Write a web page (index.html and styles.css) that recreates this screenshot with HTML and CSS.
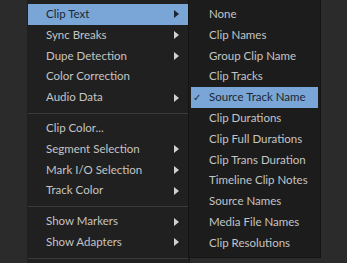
FILE: index.html
```html
<!DOCTYPE html>
<html lang="en">
<head>
    <meta charset="UTF-8">
    <title>Clip Text Menu</title>
    <link rel="stylesheet" href="styles.css">
</head>
<body>
    <div class="screen">
        <ul class="menu main">
            <li class="item active">Clip Text <span class="arrow"></span></li>
            <li class="item">Sync Breaks <span class="arrow"></span></li>
            <li class="item">Dupe Detection <span class="arrow"></span></li>
            <li class="item">Color Correction</li>
            <li class="item">Audio Data <span class="arrow"></span></li>
            <li class="sep"></li>
            <li class="item">Clip Color...</li>
            <li class="item">Segment Selection <span class="arrow"></span></li>
            <li class="item">Mark I/O Selection <span class="arrow"></span></li>
            <li class="item">Track Color <span class="arrow"></span></li>
            <li class="sep"></li>
            <li class="item">Show Markers <span class="arrow"></span></li>
            <li class="item">Show Adapters <span class="arrow"></span></li>
            <li class="sep"></li>
        </ul>
        <ul class="menu sub">
            <li class="item">None</li>
            <li class="item">Clip Names</li>
            <li class="item">Group Clip Name</li>
            <li class="item">Clip Tracks</li>
            <li class="item active"><span class="check">&#10003;</span>Source Track Name</li>
            <li class="item">Clip Durations</li>
            <li class="item">Clip Full Durations</li>
            <li class="item">Clip Trans Duration</li>
            <li class="item">Timeline Clip Notes</li>
            <li class="item">Source Names</li>
            <li class="item">Media File Names</li>
            <li class="item">Clip Resolutions</li>
        </ul>
    </div>
</body>
</html>
```

FILE: styles.css
```css
body {
    margin: 0;
    background: #2b2b2b;
    font-family: Lato, sans-serif;
    font-size: 11.5px;
    overflow: hidden;
}
.screen {
    display: flex;
    align-items: flex-start;
    padding-left: 27px;
    height: 263px;
    overflow: hidden;
}
.menu {
    list-style: none;
    margin: 0;
    color: #c4c4c4;
}
.main {
    box-sizing: border-box;
    width: 163px;
    height: 263px;
    padding: 4px 1px 0 1px;
    background: #202020;
    border-right: 1px solid #161616;
}
.sub {
    width: 127px;
    margin-left: -2px;
    padding: 4px 2px 3px 2px;
    background: #1c1c1c;
    border: 1px solid #141414;
    border-top: none;
}
.item {
    height: 20.8px;
    line-height: 20.8px;
    display: flex;
    align-items: center;
    white-space: nowrap;
}
.main .item {
    padding: 0 9px 0 18px;
    justify-content: space-between;
}
.sub .item {
    padding-left: 18px;
    position: relative;
}
.active {
    background: #79a6d6;
    color: #1c2633;
}
.arrow {
    width: 0;
    height: 0;
    border-top: 4px solid transparent;
    border-bottom: 4px solid transparent;
    border-left: 5px solid #d0d0d0;
}
.active .arrow {
    border-left-color: #1c2633;
}
.check {
    position: absolute;
    left: 2px;
    font-size: 10px;
}
.sep {
    height: 1px;
    background: #3a3a3a;
    margin: 5px 0 4px 0;
}
```
